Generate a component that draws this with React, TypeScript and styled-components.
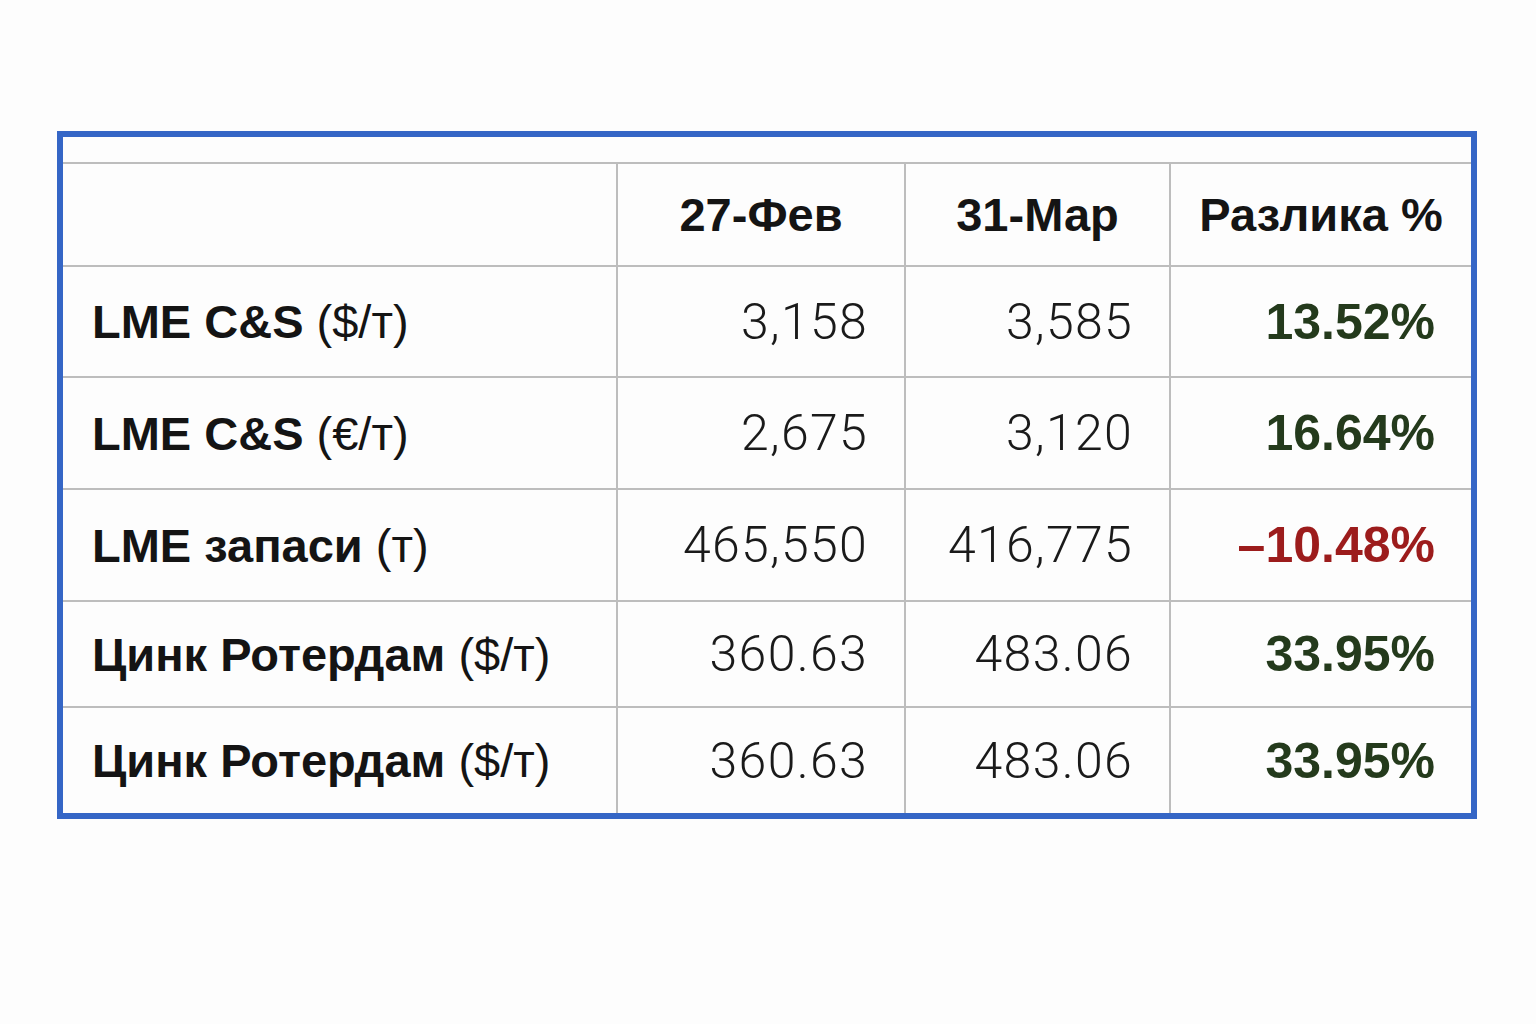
import React from "react";
import styled, { createGlobalStyle } from "styled-components";

const Global = createGlobalStyle`
  html, body { margin: 0; padding: 0; background: #fdfdfd; }
  body { font-family: "Liberation Sans", Arial, sans-serif; }
`;

const Page = styled.div`
  width: 1536px;
  height: 1024px;
  box-sizing: border-box;
  padding: 131px 0 0 57px;
  background: #fdfdfd;
`;

const Frame = styled.div`
  width: 1420px;
  box-sizing: border-box;
  border: 6px solid #3566c6;
  padding-top: 25px;
  background: #fdfdfd;
`;

const Grid = styled.div`
  display: grid;
  grid-template-columns: 553px 288px 265px 302px;
`;

const Cell = styled.div<{ $h: number; $first?: boolean; $align: "left" | "right" | "center" }>`
  height: ${(p) => p.$h}px;
  box-sizing: border-box;
  border-top: 2px solid #bdbdbd;
  border-left: ${(p) => (p.$first ? "none" : "2px solid #bdbdbd")};
  display: flex;
  align-items: center;
  justify-content: ${(p) =>
    p.$align === "left" ? "flex-start" : p.$align === "right" ? "flex-end" : "center"};
  padding: ${(p) => (p.$align === "left" ? "0 0 0 29px" : p.$align === "right" ? "0 36px 0 0" : "0")};
  white-space: nowrap;
`;

const HeadText = styled.span`
  font-family: "Liberation Sans", Arial, sans-serif;
  font-weight: 700;
  font-size: 47px;
  color: #141414;
`;

const Label = styled.span`
  font-family: "Liberation Sans", Arial, sans-serif;
  font-size: 47px;
  color: #141414;
`;

const Strong = styled.b`
  font-weight: 700;
`;

const Num = styled.span`
  font-family: Roboto, "Liberation Sans", sans-serif;
  font-weight: 300;
  font-size: 50px;
  color: #1a1a1a;
  letter-spacing: 1.3px;
`;

const Pct = styled.span<{ $neg?: boolean }>`
  font-family: "Liberation Sans", Arial, sans-serif;
  font-weight: 700;
  font-size: 50px;
  color: ${(p) => (p.$neg ? "#9c1c1c" : "#243a1c")};
`;

type Row = { bold: string; unit: string; a: string; b: string; pct: string; neg?: boolean; h: number };

const rows: Row[] = [
  { bold: "LME C&S", unit: "($/т)", a: "3,158", b: "3,585", pct: "13.52%", h: 111 },
  { bold: "LME C&S", unit: "(€/т)", a: "2,675", b: "3,120", pct: "16.64%", h: 112 },
  { bold: "LME запаси", unit: "(т)", a: "465,550", b: "416,775", pct: "–10.48%", neg: true, h: 112 },
  { bold: "Цинк Ротердам", unit: "($/т)", a: "360.63", b: "483.06", pct: "33.95%", h: 106 },
  { bold: "Цинк Ротердам", unit: "($/т)", a: "360.63", b: "483.06", pct: "33.95%", h: 107 },
];

export default function App() {
  return (
    <>
      <Global />
      <Page>
        <Frame>
          <Grid>
            <Cell $h={103} $first $align="left" />
            <Cell $h={103} $align="center">
              <HeadText>27-Фев</HeadText>
            </Cell>
            <Cell $h={103} $align="center">
              <HeadText>31-Мар</HeadText>
            </Cell>
            <Cell $h={103} $align="center">
              <HeadText>Разлика %</HeadText>
            </Cell>
            {rows.map((r, i) => (
              <React.Fragment key={i}>
                <Cell $h={r.h} $first $align="left">
                  <Label>
                    <Strong>{r.bold}</Strong> {r.unit}
                  </Label>
                </Cell>
                <Cell $h={r.h} $align="right">
                  <Num>{r.a}</Num>
                </Cell>
                <Cell $h={r.h} $align="right">
                  <Num>{r.b}</Num>
                </Cell>
                <Cell $h={r.h} $align="right">
                  <Pct $neg={r.neg}>{r.pct}</Pct>
                </Cell>
              </React.Fragment>
            ))}
          </Grid>
        </Frame>
      </Page>
    </>
  );
}
